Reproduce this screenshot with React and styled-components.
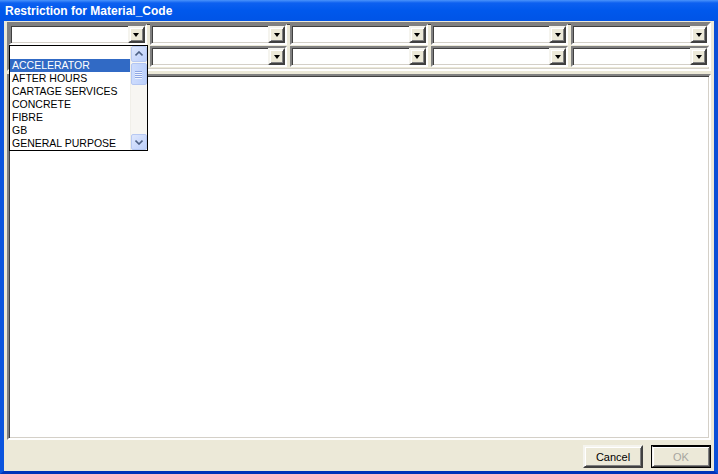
import React from 'react';
import styled, { createGlobalStyle } from 'styled-components';

const GlobalStyle = createGlobalStyle`
  html, body {
    margin: 0;
    padding: 0;
    background: #ffffff;
  }
  body {
    font-family: 'Liberation Sans', Arial, sans-serif;
  }
`;

const Window = styled.div`
  width: 718px;
  height: 474px;
  display: flex;
  flex-direction: column;
  box-sizing: border-box;
  overflow: hidden;
`;

const TitleBar = styled.div`
  height: 21px;
  flex: none;
  display: flex;
  align-items: center;
  padding-left: 5px;
  box-sizing: border-box;
  background: linear-gradient(to bottom, #4a93fb 0, #0d60f0 3px, #0058ec 50%, #0054e6 100%);
  color: #ffffff;
  font-family: 'Liberation Sans', Arial, sans-serif;
  font-weight: bold;
  font-size: 12px;
  padding-top: 1px;
`;

const Client = styled.div`
  flex: 1;
  min-height: 0;
  display: flex;
  flex-direction: column;
  background: #ece9d8;
  border-left: 4px solid #0b55de;
  border-right: 4px solid #0a4fd6;
  border-bottom: 3px solid #0033b8;
  padding: 1px 3px 0 3px;
  box-sizing: border-box;
`;

const sunken = `
  border: 2px solid;
  border-color: #808080 #ffffff #ffffff #808080;
  box-shadow: inset 1px 1px 0 #404040, inset -1px -1px 0 #d4d0c8;
`;

const raised = `
  border: 2px solid;
  border-color: #f5f4ee #404040 #404040 #f5f4ee;
  box-shadow: inset 1px 1px 0 #ffffff, inset -1px -1px 0 #808080;
`;

const FilterPanel = styled.div`
  ${sunken}
  box-sizing: border-box;
  display: grid;
  grid-template-columns: repeat(5, 1fr);
  grid-auto-rows: 21px;
  column-gap: 3px;
  row-gap: 1px;
  padding-bottom: 2px;
`;

const ComboCell = styled.div`
  position: relative;
`;

const Combo = styled.div`
  ${sunken}
  box-sizing: border-box;
  height: 21px;
  background: #ffffff;
  display: flex;
  justify-content: flex-end;
`;

const DropButton = styled.div`
  ${raised}
  box-sizing: border-box;
  width: 17px;
  height: 17px;
  background: #ece9d8;
  display: flex;
  align-items: center;
  justify-content: center;
  &::after {
    content: '';
    width: 0;
    height: 0;
    border-left: 3.5px solid transparent;
    border-right: 3.5px solid transparent;
    border-top: 4px solid #000000;
    margin-top: 1px;
  }
`;

const DropList = styled.div`
  position: absolute;
  top: 100%;
  left: 0;
  width: calc(100% + 1px);
  height: 106px;
  box-sizing: border-box;
  border: 1px solid #000000;
  background: #ffffff;
  display: flex;
  z-index: 10;
`;

const Items = styled.div`
  flex: 1;
  display: flex;
  flex-direction: column;
  min-width: 0;
`;

const Item = styled.div`
  height: 13px;
  line-height: 13px;
  padding-left: 2px;
  font-size: 10.5px;
  white-space: nowrap;
  overflow: hidden;
  color: ${(p) => (p.$selected ? '#ffffff' : '#000000')};
  background: ${(p) => (p.$selected ? '#316ac5' : 'transparent')};
`;

const ScrollBar = styled.div`
  width: 17px;
  flex: none;
  display: flex;
  flex-direction: column;
  background: #f7f6f2;
  border-left: 1px solid #f0efe9;
  box-sizing: border-box;
`;

const ScrollArrow = styled.div`
  width: 16px;
  height: 16px;
  box-sizing: border-box;
  border: 1px solid #b7c9f2;
  border-radius: 2px;
  background: linear-gradient(to bottom right, #dfe8fd, #bccffa);
  display: flex;
  align-items: center;
  justify-content: center;
`;

const ScrollThumb = styled.div`
  width: 16px;
  height: 22px;
  margin-top: 1px;
  box-sizing: border-box;
  border: 1px solid #b3c6f2;
  border-radius: 2px;
  background: linear-gradient(to right, #cddcfd, #bcd0fb);
  display: flex;
  flex-direction: column;
  align-items: center;
  justify-content: center;
  gap: 1px;
`;

const Grip = styled.span`
  width: 7px;
  height: 1px;
  background: #8fa7e4;
  box-shadow: 0 1px 0 #eef3fe;
`;

const Spacer = styled.div`
  flex: 1;
`;

const ResultArea = styled.div`
  ${sunken}
  flex: 1;
  margin-top: 3px;
  background: #ffffff;
  box-sizing: border-box;
`;

const ButtonBar = styled.div`
  height: 31px;
  flex: none;
  display: flex;
  justify-content: flex-end;
  align-items: flex-start;
  padding-top: 5px;
  gap: 8px;
  box-sizing: border-box;
`;

const DialogButton = styled.button`
  ${raised}
  width: 60px;
  height: 23px;
  box-sizing: border-box;
  background: #ece9d8;
  font-family: 'Liberation Sans', Arial, sans-serif;
  font-size: 11px;
  color: ${(p) => (p.disabled ? '#a7a6a0' : '#000000')};
  padding: 0;
  ${(p) =>
    p.$default &&
    `
    outline: 1px solid #000000;
    outline-offset: -1px;
    border-color: #000000 #404040 #404040 #f5f4ee;
    border-width: 2px;
  `}
`;

const Chevron = ({ down }) => (
  <svg width="8" height="6" viewBox="0 0 8 6">
    <path
      d={down ? 'M0.5 1.5 L4 5 L7.5 1.5' : 'M0.5 4.5 L4 1 L7.5 4.5'}
      fill="none"
      stroke="#4d6185"
      strokeWidth="1.6"
    />
  </svg>
);

const materials = [
  '',
  'ACCELERATOR',
  'AFTER HOURS',
  'CARTAGE SERVICES',
  'CONCRETE',
  'FIBRE',
  'GB',
  'GENERAL PURPOSE',
];

const App = () => {
  const cells = Array.from({ length: 10 }, (_, i) => i);
  return (
    <>
      <GlobalStyle />
      <Window>
        <TitleBar>Restriction for Material_Code</TitleBar>
        <Client>
          <FilterPanel>
            {cells.map((i) => (
              <ComboCell key={i}>
                <Combo>
                  <DropButton />
                </Combo>
                {i === 0 && (
                  <DropList>
                    <Items>
                      {materials.map((m, idx) => (
                        <Item key={idx} $selected={m === 'ACCELERATOR'}>
                          {m}
                        </Item>
                      ))}
                    </Items>
                    <ScrollBar>
                      <ScrollArrow>
                        <Chevron />
                      </ScrollArrow>
                      <ScrollThumb>
                        <Grip />
                        <Grip />
                        <Grip />
                        <Grip />
                      </ScrollThumb>
                      <Spacer />
                      <ScrollArrow>
                        <Chevron down />
                      </ScrollArrow>
                    </ScrollBar>
                  </DropList>
                )}
              </ComboCell>
            ))}
          </FilterPanel>
          <ResultArea />
          <ButtonBar>
            <DialogButton>Cancel</DialogButton>
            <DialogButton $default disabled>
              OK
            </DialogButton>
          </ButtonBar>
        </Client>
      </Window>
    </>
  );
};

export default App;
